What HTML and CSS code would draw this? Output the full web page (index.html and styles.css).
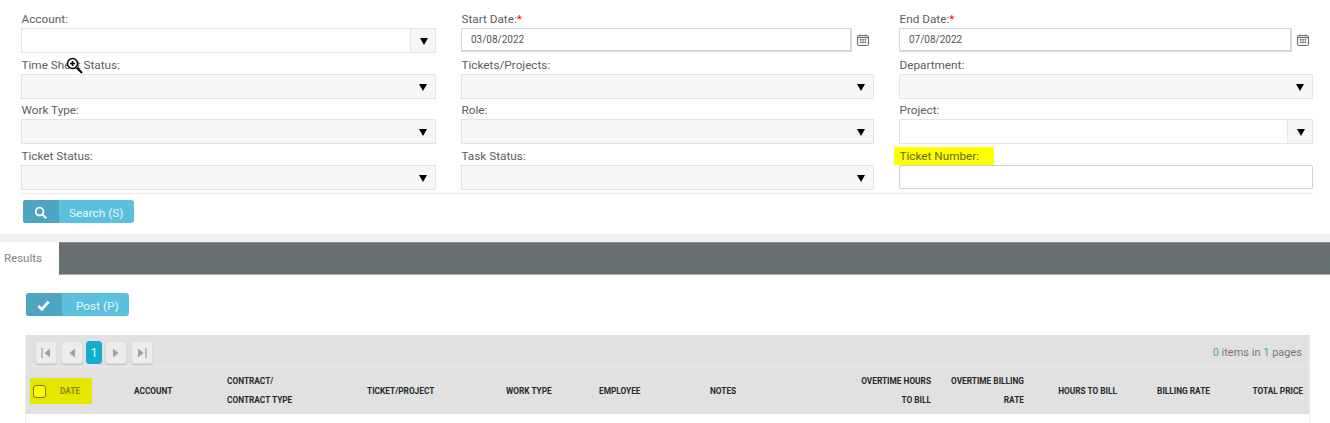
FILE: index.html
```html
<!DOCTYPE html>
<html lang="en">
<head>
<meta charset="utf-8">
<title>Time Sheet Search</title>
<link rel="stylesheet" href="styles.css">
</head>
<body>
<section class="filters">
  <div class="field"><label class="lbl">Account:</label><div class="combo white"><span class="combo-text"></span><span class="arrow boxed"><i></i></span></div></div>
  <div class="field"><label class="lbl">Start Date:<b>*</b></label><div class="date-row"><div class="date">03/08/2022</div><svg class="cal" viewBox="0 0 12 12"><path d="M1.5 1.5h9a1 1 0 0 1 1 1v8a1 1 0 0 1-1 1h-9a1 1 0 0 1-1-1v-8a1 1 0 0 1 1-1z" fill="#f4f4f4" stroke="#666"/><path d="M3 0.5v2M9 0.5v2M1 3.5h10" stroke="#666"/><path d="M3 5h1.5v1.4H3zM5.3 5h1.5v1.4H5.3zM7.6 5h1.5v1.4H7.6zM3 7.6h1.5V9H3zM5.3 7.6h1.5V9H5.3zM7.6 7.6h1.5V9H7.6z" fill="#666"/></svg></div></div>
  <div class="field"><label class="lbl">End Date:<b>*</b></label><div class="date-row"><div class="date">07/08/2022</div><svg class="cal" viewBox="0 0 12 12"><path d="M1.5 1.5h9a1 1 0 0 1 1 1v8a1 1 0 0 1-1 1h-9a1 1 0 0 1-1-1v-8a1 1 0 0 1 1-1z" fill="#f4f4f4" stroke="#666"/><path d="M3 0.5v2M9 0.5v2M1 3.5h10" stroke="#666"/><path d="M3 5h1.5v1.4H3zM5.3 5h1.5v1.4H5.3zM7.6 5h1.5v1.4H7.6zM3 7.6h1.5V9H3zM5.3 7.6h1.5V9H5.3zM7.6 7.6h1.5V9H7.6z" fill="#666"/></svg></div></div>

  <div class="field"><label class="lbl">Time Sheet Status:</label><div class="combo"><span class="combo-text"></span><span class="arrow"><i></i></span></div></div>
  <div class="field"><label class="lbl">Tickets/Projects:</label><div class="combo"><span class="combo-text"></span><span class="arrow"><i></i></span></div></div>
  <div class="field"><label class="lbl">Department:</label><div class="combo"><span class="combo-text"></span><span class="arrow"><i></i></span></div></div>

  <div class="field tight"><label class="lbl">Work Type:</label><div class="combo"><span class="combo-text"></span><span class="arrow"><i></i></span></div></div>
  <div class="field tight"><label class="lbl">Role:</label><div class="combo"><span class="combo-text"></span><span class="arrow"><i></i></span></div></div>
  <div class="field tight"><label class="lbl">Project:</label><div class="combo white"><span class="combo-text"></span><span class="arrow boxed"><i></i></span></div></div>

  <div class="field"><label class="lbl">Ticket Status:</label><div class="combo"><span class="combo-text"></span><span class="arrow"><i></i></span></div></div>
  <div class="field"><label class="lbl">Task Status:</label><div class="combo"><span class="combo-text"></span><span class="arrow"><i></i></span></div></div>
  <div class="field"><label class="lbl"><span class="mark">Ticket Number:</span></label><div class="textbox"></div></div>
</section>
<div class="rule"></div>
<div class="search-wrap">
  <button class="btn"><span class="btn-icon"><svg viewBox="0 0 14 14" class="ico"><circle cx="6" cy="6" r="4.2" fill="none" stroke="#fff" stroke-width="2"/><path d="M9 9l3.6 3.6" stroke="#fff" stroke-width="2.2" stroke-linecap="round"/></svg></span><span class="btn-text">Search (S)</span></button>
</div>
<div class="band"></div>
<div class="tabs"><div class="tab">Results</div><div class="tab-fill"></div></div>
<div class="post-wrap">
  <button class="btn post"><span class="btn-icon"><svg viewBox="0 0 14 14" class="ico check"><path d="M1.5 7.5l3.7 3.5 7.3-8" fill="none" stroke="#fff" stroke-width="3"/></svg></span><span class="btn-text">Post (P)</span></button>
</div>
<section class="grid">
  <div class="pager">
    <div class="pages">
      <span class="pg"><svg viewBox="0 0 12 12"><path d="M2 1v10" stroke="#a0a0a0" stroke-width="1.2"/><path d="M10 1.5v9L4.5 6z" fill="#a0a0a0"/></svg></span>
      <span class="pg"><svg viewBox="0 0 12 12"><path d="M9 1.5v9L3.5 6z" fill="#a0a0a0"/></svg></span>
      <span class="pg current">1</span>
      <span class="pg"><svg viewBox="0 0 12 12"><path d="M3 1.5v9L8.5 6z" fill="#a0a0a0"/></svg></span>
      <span class="pg"><svg viewBox="0 0 12 12"><path d="M10 1v10" stroke="#a0a0a0" stroke-width="1.2"/><path d="M2 1.5v9L7.5 6z" fill="#a0a0a0"/></svg></span>
    </div>
    <div class="info"><em>0</em> items in <em>1</em> pages</div>
  </div>
  <div class="head">
    <div class="c c-date"><span class="hl"><span class="chk"></span><span class="hl-text">Date</span></span></div>
    <div class="c c-account">Account</div>
    <div class="c c-contract">Contract/<br>Contract Type</div>
    <div class="c c-ticket">Ticket/Project</div>
    <div class="c c-work">Work Type</div>
    <div class="c c-emp">Employee</div>
    <div class="c c-notes">Notes</div>
    <div class="c r c-oth">Overtime Hours<br>To Bill</div>
    <div class="c r c-num">Overtime Billing<br>Rate</div>
    <div class="c r c-num">Hours To Bill</div>
    <div class="c r c-num">Billing Rate</div>
    <div class="c r c-num">Total Price</div>
  </div>
</section>
<svg class="cursor" viewBox="0 0 18 18"><circle cx="6.5" cy="6.5" r="5" fill="#fff" stroke="#000" stroke-width="1.4"/><path d="M4 6.5h5M6.5 4v5" stroke="#000" stroke-width="1.5"/><path d="M10.5 10.5l5.5 5.5" stroke="#000" stroke-width="2"/></svg>
</body>
</html>
```

FILE: styles.css
```css
* { box-sizing: border-box; }
html, body { margin: 0; padding: 0; }
body {
  width: 1330px;
  height: 423px;
  overflow: hidden;
  position: relative;
  background: #fff;
  font-family: Roboto, "Liberation Sans", sans-serif;
  font-size: 12px;
  color: #555;
}
.filters {
  display: grid;
  grid-template-columns: 415px 413px 414px;
  column-gap: 25px;
  row-gap: 3px;
  padding: 10px 0 0 21px;
}
.field { display: flex; flex-direction: column; }
.field.tight { margin-top: -1px; }
.lbl { height: 18px; line-height: 18px; font-size: 11.75px; color: #585f60; padding-left: 0.5px; }
.lbl b { color: #f00; font-weight: 400; }
.mark { display: inline-block; background: #ff0; margin-left: -5.5px; padding: 0 15px 0 5.5px; color: #5f6a10; }
.combo {
  height: 25px;
  display: flex;
  background: #f7f7f7;
  border: 1px solid #e4e4e4;
}
.combo.white { background: #fff; }
.combo-text { flex: 1; }
.arrow { width: 25px; padding-left: 1px; display: flex; align-items: center; justify-content: center; }
.arrow.boxed { background: #f6f6f6; border-left: 1px solid #e8e8e8; }
.arrow i { width: 0; height: 0; border-left: 4px solid transparent; border-right: 4px solid transparent; border-top: 7px solid #000; margin-top: 2px; }
.date-row { display: flex; align-items: flex-start; gap: 5px; height: 25px; }
.date {
  width: 391px;
  height: 24px;
  border: 1px solid #d8d8d8;
  border-bottom-width: 2px;
  border-right-width: 2px;
  background: #fff;
  padding-left: 9px;
  line-height: 22px;
  font-size: 10px;
  color: #555;
}
.field:nth-child(3) .date { width: 393px; }
.cal { width: 12px; height: 12px; margin-top: 6px; }
.textbox { height: 24px; border: 1px solid #d0d0d0; border-radius: 2px; background: #fff; }
.rule { height: 1px; margin: 3px 17px 0 21px; background: #ececec; }
.search-wrap { padding: 6px 0 0 23px; height: 40px; }
.btn {
  display: flex;
  height: 23px;
  padding: 0;
  border: 0;
  border-radius: 3px;
  background: #5bc0de;
  overflow: hidden;
  font: inherit;
  color: #fff;
  width: 111px;
}
.btn-icon { width: 36px; height: 100%; padding: 2px 2px 0 0; background: #4ea5c2; display: flex; align-items: center; justify-content: center; }
.ico { width: 13px; height: 13px; }
.btn-text { line-height: 27px; padding-left: 10px; font-size: 11.8px; color: #eaf7fb; }
.post { width: 103px; }
.post .btn-text { padding-left: 14px; }
.band { height: 8px; background: #f0f0f0; }
.tabs { display: flex; height: 33px; }
.tab { width: 59px; padding-left: 4px; line-height: 33px; font-size: 11.5px; color: #808080; background: #fff; }
.tab-fill { flex: 1; background: #676f70; border-top: 1px solid #8b8f90; border-bottom: 1px solid #a4a8a8; }
.post-wrap { padding: 18px 0 0 26px; height: 60px; }
.grid {
  margin-left: 25px;
  width: 1285px;
  height: 88px;
  border-left: 1px solid #eee;
  border-right: 1px solid #eee;
}
.pager {
  height: 32px;
  background: #e1e1e1;
  border-bottom: 1px solid #e8e8e8;
  display: flex;
  align-items: flex-start;
  justify-content: space-between;
  padding: 6px 7px 0 9px;
}
.pages { display: flex; }
.pg {
  width: 22px;
  height: 23px;
  margin-right: 4px;
  background: #ececec;
  border: 1px solid #dcdcdc;
  border-radius: 3px;
  box-shadow: 0 1px 1px #c4c4c4;
  display: flex;
  align-items: center;
  justify-content: center;
}
.pg svg { width: 12px; height: 12px; }
.pg.current { width: 16px; margin: 0 3px 0 0; background: #14adcb; border-color: #14adcb; color: #e8f8fb; font-size: 12px; box-shadow: none; }
.pg:nth-child(2) { margin-right: 3px; }
.info { font-size: 11px; line-height: 18px; color: #777; margin-top: 3px; white-space: nowrap; }
.info em { font-style: normal; color: #3fa3c4; }
.head {
  height: 47px;
  padding-top: 1px;
  background: #e1e1e1;
  display: grid;
  grid-template-columns: 108px 93px 140px 139px 93px 111px 128px 93px 93px 93px 93px 93px;
  align-items: center;
}
.c {
  font-size: 8.3px;
  font-weight: 700;
  line-height: 19px;
  text-transform: uppercase;
  color: #25292b;
  white-space: nowrap;
}
.r { text-align: right; }
.hl { display: flex; align-items: center; width: 62px; height: 26px; margin-left: 4px; background: #e6e600; }
.chk { width: 13px; height: 13px; margin-left: 3px; border: 1px solid #77771a; border-radius: 3px; background: #ff0; }
.hl-text { margin-left: 14px; color: #8b8b12; }
.cursor { position: absolute; left: 66px; top: 57px; width: 18px; height: 18px; }
```
